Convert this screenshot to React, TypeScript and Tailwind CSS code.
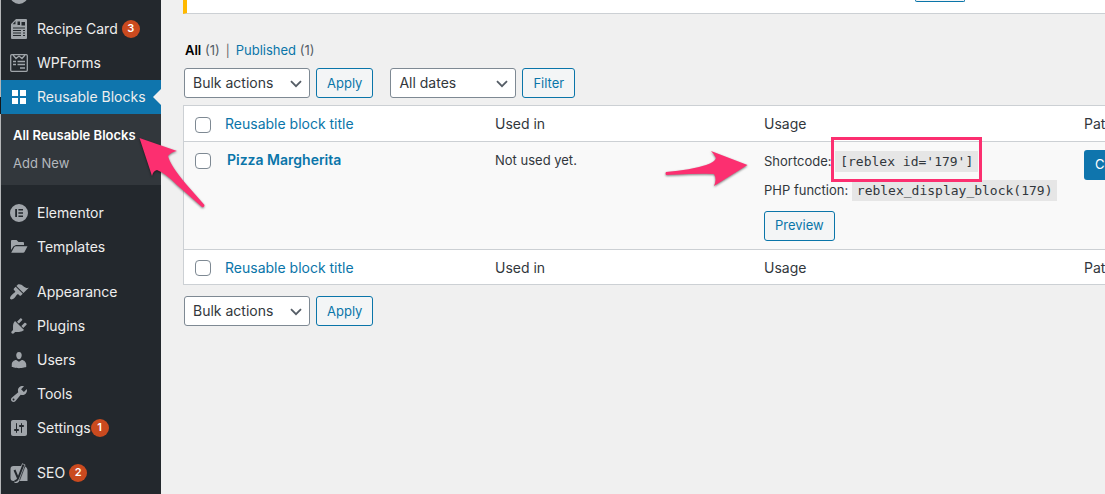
import type { ReactNode } from "react"
import { clsx } from "clsx"

const icons: Record<string, ReactNode> = {
  comments: <circle cx="10" cy="10" r="9" />,
  recipe: (
    <path
      fillRule="evenodd"
      d="M7 0h10a1 1 0 0 1 1 1v18a1 1 0 0 1-1 1H3a1 1 0 0 1-1-1V5zM6.500 2L3.700 5.200h2.800zM8.500 2.500v3.500H11V2.500zM12.500 3v3.500H16V3zM4 8.500v1h12v-1zM4 11v1h8v-1zM4 13.500v1h8v-1zM4 16v1h8v-1zM14 11v1h2v-1zM14 13.500v1h2v-1zM14 16v1h2v-1z"
    />
  ),
  wpforms: (
    <g fill="none" stroke="currentColor" strokeWidth="1.300">
      <rect x="1.700" y="1.700" width="16.600" height="16.600" rx="1" />
      <path d="M4 2l3 3.500L10 3l3 2.500L16 2M4 8.500h3M8.500 8.500H16M4 11.500h3M8.500 11.500H16M11 15h5" />
    </g>
  ),
  blocks: <path d="M3 3h6v6H3zM11 3h6v6h-6zM3 11h6v6H3zM11 11h6v6h-6z" />,
  elementor: (
    <path
      fillRule="evenodd"
      d="M10 1a9 9 0 1 0 0 18 9 9 0 0 0 0-18zM6.200 6H8v8H6.200zM9.400 6H14v1.600H9.400zM9.400 9.200H14v1.600H9.400zM9.400 12.400H14V14H9.400z"
    />
  ),
  folder: (
    <path d="M3 3h4.500l2 2H14a1 1 0 0 1 1 1v2H7L4.500 9.200 2 13V4a1 1 0 0 1 1-1zM7 9.300h11.500L15.500 15q-.4.700-1.300.700H2.200L5.300 10q.5-.7 1.700-.7z" />
  ),
  appearance: (
    <path d="M14.480 11.060L7.410 3.990l1.500-1.500c.5-.56 2.300-.47 3.510.32 1.210.8 1.430 1.280 2.910 2.100 1.180.64 2.450 1.260 4.450.85zm-.71.71L6.700 4.700 4.930 6.470c-.39.39-.39 1.020 0 1.410l1.060 1.060c.39.39.39 1.030 0 1.420-.6.600-1.430 1.110-2.210 1.690-.35.26-.7.530-1.010.840C1.430 14.230.400 16.080 1.400 17.070c.990 1 2.840-.030 4.180-1.360.310-.310.580-.660.850-1.020.570-.780 1.080-1.610 1.690-2.210.390-.390 1.020-.390 1.410 0l1.060 1.060c.390.390 1.020.390 1.410 0z" />
  ),
  plugins: (
    <path d="M13.110 4.360L9.870 7.600 8 5.730l3.240-3.240c.350-.340 1.050-.2 1.560.32.520.510.660 1.210.310 1.550zm-8 1.770l.910-1.120 9.010 9.010-1.190.840c-.710.710-2.630 1.160-3.820 1.160H6.140L4.900 17.260c-.590.590-1.540.590-2.120 0-.590-.580-.590-1.530 0-2.120l1.240-1.240v-3.880c0-1.130.400-3.190 1.090-3.890zm7.260 3.970l3.240-3.240c.340-.35 1.040-.21 1.550.31.520.510.660 1.210.310 1.550l-3.240 3.250z" />
  ),
  users: (
    <path d="M10 9.250c-2.270 0-2.730-3.440-2.730-3.440C7 4.020 7.820 2 9.970 2c2.160 0 2.980 2.020 2.710 3.810 0 0-.410 3.440-2.680 3.440zm0 2.570L12.720 10c2.390 0 4.520 2.330 4.520 4.530v2.490s-3.650 1.130-7.240 1.130c-3.650 0-7.240-1.130-7.240-1.130v-2.490c0-2.250 1.940-4.480 4.470-4.480z" />
  ),
  tools: (
    <path d="M16.680 9.770c-1.340 1.340-3.300 1.670-4.950.99l-5.410 6.520c-.990.990-2.590.990-3.580 0s-.990-2.590 0-3.570l6.520-5.420c-.680-1.650-.350-3.610.990-4.950 1.280-1.280 3.120-1.620 4.720-1.060l-2.890 2.890 2.820 2.820 2.860-2.870c.530 1.580.180 3.390-1.080 4.650zM3.810 16.210c.400.390 1.040.390 1.430 0 .400-.400.400-1.040 0-1.430-.390-.400-1.030-.400-1.430 0-.390.390-.390 1.030 0 1.430z" />
  ),
  settings: (
    <path
      fillRule="evenodd"
      d="M18 16V4c0-1.100-.9-2-2-2H4c-1.100 0-2 .9-2 2v12c0 1.100.9 2 2 2h12c1.100 0 2-.9 2-2zM8 11h1c.550 0 1 .450 1 1s-.450 1-1 1H8v1.500c0 .280-.220.500-.5.500s-.5-.220-.5-.5V13H6c-.550 0-1-.450-1-1s.450-1 1-1h1V5.500c0-.280.220-.5.500-.5s.5.220.5.500zM13 9h1c.550 0 1-.450 1-1s-.450-1-1-1h-1V5.500c0-.280-.220-.5-.5-.5s-.5.220-.5.500V7h-1c-.550 0-1 .450-1 1s.450 1 1 1h1v5.500c0 .280.220.500.5.500s.5-.220.5-.5z"
    />
  ),
  seo: (
    <>
      <path d="M4.500 3H15q3.500 1 3.500 4.500V18H4.500a3 3 0 0 1-3-3V6a3 3 0 0 1 3-3z" />
      <path d="M15 1L9.500 15.500Q8.200 18.500 5.500 18.500" fill="none" stroke="currentColor" strokeWidth="4" />
      <path d="M5.500 7l3.200 7.500M14.500 1.500L9 15.500Q8 18 5.500 18" fill="none" stroke="#23282d" strokeWidth="2" />
      <path d="M17 .5L10.500 17.500" fill="none" stroke="#23282d" strokeWidth=".8" />
    </>
  ),
}

type Item = { icon: string; label: string; count?: number; tight?: boolean; current?: boolean }

const groups: Item[][] = [
  [
    { icon: "recipe", label: "Recipe Card", count: 3 },
    { icon: "wpforms", label: "WPForms" },
    { icon: "blocks", label: "Reusable Blocks", current: true },
  ],
  [
    { icon: "elementor", label: "Elementor" },
    { icon: "folder", label: "Templates" },
  ],
  [
    { icon: "appearance", label: "Appearance" },
    { icon: "plugins", label: "Plugins" },
    { icon: "users", label: "Users" },
    { icon: "tools", label: "Tools" },
    { icon: "settings", label: "Settings", count: 1, tight: true },
  ],
  [{ icon: "seo", label: "SEO", count: 2 }],
]

function Icon({ name }: { name: string }) {
  return (
    <svg viewBox="0 0 20 20" className="size-5 shrink-0" fill="currentColor" aria-hidden="true">
      {icons[name]}
    </svg>
  )
}

function MenuItem({ icon, label, count, tight, current }: Item) {
  return (
    <li>
      <a
        href="#"
        className={clsx(
          "relative flex h-[34px] items-center pl-2 text-[#a0a5aa]",
          current && "bg-[#0f75ad] text-white"
        )}
      >
        <Icon name={icon} />
        <span className="ml-2 text-[#eeeeee]">{label}</span>
        {count && (
          <span
            className={clsx(
              "flex size-[18px] items-center justify-center rounded-full bg-[#ca4a1f] text-[11px] font-semibold text-white",
              !tight && "ml-1"
            )}
          >
            {count}
          </span>
        )}
        {current && (
          <span className="absolute right-0 border-y-8 border-r-8 border-y-transparent border-r-[#f0f0f0]" />
        )}
      </a>
      {current && (
        <ul className="bg-[#32373c] pt-[7px] pb-2 pl-3 text-[13px] leading-7 text-[#b4b9be]">
          <li>
            <a href="#" className="font-semibold text-white">All Reusable Blocks</a>
          </li>
          <li>
            <a href="#">Add New</a>
          </li>
        </ul>
      )}
    </li>
  )
}

function Select({ label, option }: { label: string; option: string }) {
  return (
    <div className="relative">
      <select
        aria-label={label}
        className="h-[30px] w-[126px] appearance-none rounded-[3px] border border-[#7e8993] bg-white pl-2 text-sm text-[#32373c]"
      >
        <option>{option}</option>
      </select>
      <svg viewBox="0 0 12 8" className="pointer-events-none absolute top-3 right-2 h-2 w-3" aria-hidden="true">
        <path d="M1 1.200L6 6.200l5-5" fill="none" stroke="#555d66" strokeWidth="1.800" />
      </svg>
    </div>
  )
}

function Button({ children }: { children: ReactNode }) {
  return (
    <button className="h-[30px] rounded-[3px] border border-[#0a75a9] bg-[#f3f5f6] px-2.5 pt-px text-[13px] text-[#0a75a9]">
      {children}
    </button>
  )
}

function Code({ children }: { children: string }) {
  return (
    <code className="bg-[#e6e6e6] px-[5px] py-[3px] font-['DejaVu_Sans_Mono',monospace] text-[13px] leading-[15px]">
      {children}
    </code>
  )
}

function Check({ label }: { label: string }) {
  return (
    <input
      type="checkbox"
      aria-label={label}
      className="block size-4 appearance-none rounded-[4px] border border-[#7e8993] bg-white"
    />
  )
}

function HeadingRow() {
  return (
    <tr className="h-[35px] bg-white text-left text-sm">
      <td className="pt-[3px] pl-[11px]">
        <Check label="Select all" />
      </td>
      <th className="pt-0.5 font-normal">
        <a href="#" className="text-[#0a75a9]">Reusable block title</a>
      </th>
      <th className="pt-0.5 font-normal">Used in</th>
      <th className="pt-0.5 font-normal">Usage</th>
      <th className="pt-0.5 font-normal">Pattern</th>
    </tr>
  )
}

export default function App() {
  return (
    <div className="flex h-screen overflow-hidden bg-[#f0f0f0] font-[Inter,sans-serif] text-[13px] text-[#32373c]">
      <div className="flex w-px shrink-0 flex-col bg-[#b4b6b8]">
        <div className="mt-[97px] h-[17px] bg-[#14171a]" />
      </div>
      <nav className="w-40 shrink-0 bg-[#23282d] text-sm" aria-label="Admin menu">
        <div className="flex h-3 items-end overflow-hidden pb-[7px] pl-2 text-[#a0a5aa]">
          <Icon name="comments" />
        </div>
        <div className="flex flex-col gap-[11px]">
          {groups.map((group, i) => (
            <ul key={i}>
              {group.map((item) => (
                <MenuItem key={item.label} {...item} />
              ))}
            </ul>
          ))}
        </div>
      </nav>

      <main className="min-w-0 flex-1 pl-[22px]">
        <div className="h-3.5 border-b border-l-4 border-b-[#ccd0d4] border-l-[#ffb900] bg-white">
          <div className="ml-[728px] h-0.5 w-[50px] rounded-b-[3px] border-x border-b border-[#0a75a9] bg-[#f3f5f6]" />
        </div>

        <ul className="mt-[27px] flex h-5 items-center gap-1 pl-0.5">
          <li className="text-[#555d66]">
            <a href="#" className="font-semibold text-black">All</a> (1)
          </li>
          <li className="px-0.5 text-xs text-[#666666]">|</li>
          <li className="text-[#555d66]">
            <a href="#" className="text-[#0a75a9]">Published</a> (1)
          </li>
        </ul>

        <div className="mt-[7px] flex gap-1.5 pl-px">
          <Select label="Bulk actions" option="Bulk actions" />
          <Button>Apply</Button>
          <div className="ml-[11px] flex gap-1.5">
            <Select label="Filter by date" option="All dates" />
            <Button>Filter</Button>
          </div>
        </div>

        <div className="mt-[7px] overflow-hidden border-y border-l border-[#ccd0d4]">
          <table className="w-[1100px] table-fixed">
            <colgroup>
              <col className="w-[41px]" />
              <col className="w-[270px]" />
              <col className="w-[269px]" />
              <col className="w-[320px]" />
              <col />
            </colgroup>
            <thead className="border-b border-[#ccd0d4]">
              <HeadingRow />
            </thead>
            <tbody>
              <tr className="h-[108px] bg-[#f9f9f9] align-top">
                <td className="pt-[11px] pl-[11px]">
                  <Check label="Select Pizza Margherita" />
                </td>
                <td className="pt-2 pl-0.5">
                  <a href="#" className="text-sm font-semibold text-[#0a75a9]">Pizza Margherita</a>
                </td>
                <td className="pt-2 leading-5">Not used yet.</td>
                <td className="pt-[9px]">
                  <p className="mb-[9px] leading-5">
                    Shortcode:{" "}
                    <span className="relative">
                      <Code>[reblex id='179']</Code>
                      <span className="absolute -inset-x-1 -top-4 h-[45px] border-3 border-[#fc2f70]" />
                    </span>
                  </p>
                  <p className="mb-[11px] leading-5">
                    PHP function: <Code>reblex_display_block(179)</Code>
                  </p>
                  <Button>Preview</Button>
                </td>
                <td className="pt-2">
                  <button className="h-[30px] rounded-[3px] bg-[#0f75ad] px-[11px] text-white">Convert</button>
                </td>
              </tr>
            </tbody>
            <tfoot className="border-t border-[#ccd0d4]">
              <HeadingRow />
            </tfoot>
          </table>
        </div>

        <div className="mt-[11px] flex gap-1.5 pl-px">
          <Select label="Bulk actions" option="Bulk actions" />
          <Button>Apply</Button>
        </div>
      </main>

      {/* callout arrows over the page */}
      <svg
        viewBox="0 0 74 80"
        className="pointer-events-none absolute top-[132px] left-[136px] h-20 w-[74px] drop-shadow-[0_1px_1px_rgba(0,0,0,0.5)]"
        aria-hidden="true"
      >
        <path d="M3.500 5L41 18Q35 19 32 23Q34 32 50 51L68.500 72Q68 75 66 74L41 52Q29 40 21 37Q17 38 16 43Z" transform="translate(0 1)" fill="#fc2f70" />
      </svg>
      <svg
        viewBox="0 0 86 42"
        className="pointer-events-none absolute top-[147px] left-[663px] h-[42px] w-[86px] drop-shadow-[0_1px_1px_rgba(0,0,0,0.5)]"
        aria-hidden="true"
      >
        <path d="M3 25Q28 23 43 18Q52 15 53 11Q51 7 48 4L84.500 18L51 39Q54 32 51 27Q43 26 3 28Q2 26 3 25Z" fill="#fc2f70" />
      </svg>
    </div>
  )
}
